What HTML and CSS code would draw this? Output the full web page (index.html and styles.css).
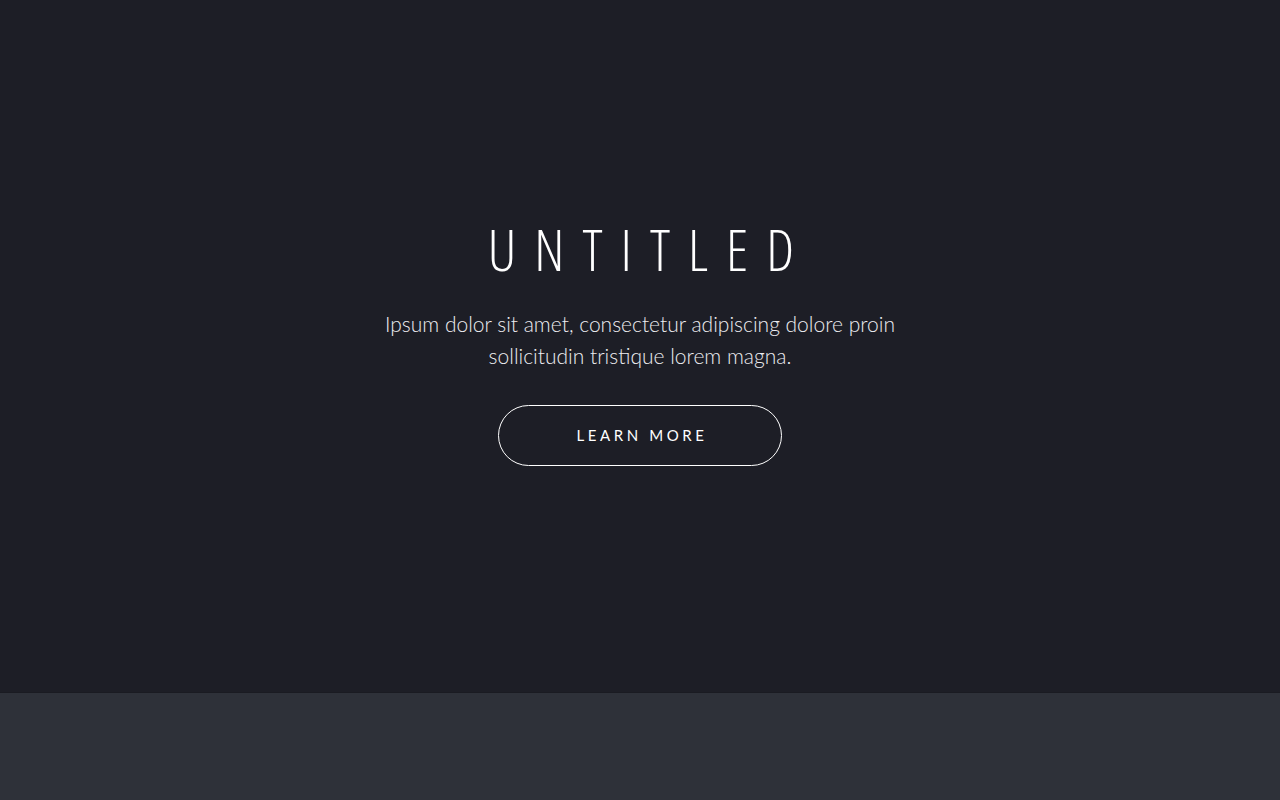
FILE: index.html
```html
<!DOCTYPE html>
<html>
  <head>
    <title>Untitled</title>
    <link rel="stylesheet" href="styles.css">
  </head>
  <body>
    <section id="banner">
      <div class="inner">
        <h1>Untitled</h1>
        <p>Ipsum dolor sit amet, consectetur adipiscing dolore proin<br>sollicitudin tristique lorem magna.</p>
        <a href="#main" class="button">Learn More</a>
      </div>
    </section>
    <section id="main"></section>
  </body>
</html>
```

FILE: styles.css
```css
  /* Base */
  html, body {
    margin: 0;
    padding: 0;
  }

  body {
    background-color: #2e3139;
    color: #ffffff;
    font-family: "Lato", "Open Sans", sans-serif;
    font-weight: 300;
  }

  /* Banner */
  #banner {
    height: 693px;
    padding-bottom: 5px;
    background-color: #1d1e26;
    border-bottom: 1px solid #1a1b22;
    box-sizing: border-box;
    display: flex;
    align-items: center;
    justify-content: center;
    text-align: center;
  }

  #banner .inner {
    display: flex;
    flex-direction: column;
    align-items: center;
  }

  #banner h1 {
    margin: 0 0 30px 0;
    font-family: "Open Sans", "Lato", sans-serif;
    font-size: 57px;
    font-weight: 300;
    font-stretch: 75%;
    line-height: 57px;
    letter-spacing: 18px;
    text-transform: uppercase;
    padding-left: 20px;
  }

  #banner p {
    margin: 0 0 33px 0;
    font-size: 21px;
    line-height: 32px;
    color: #ececf0;
  }

  /* Button */
  .button {
    display: block;
    width: 284px;
    height: 61px;
    line-height: 59px;
    box-sizing: border-box;
    border: 1px solid #ffffff;
    border-radius: 31px;
    color: #ffffff;
    text-decoration: none;
    text-transform: uppercase;
    font-size: 15px;
    font-weight: 400;
    letter-spacing: 3.6px;
    padding-left: 4px;
  }

  #main {
    height: 107px;
  }
```
